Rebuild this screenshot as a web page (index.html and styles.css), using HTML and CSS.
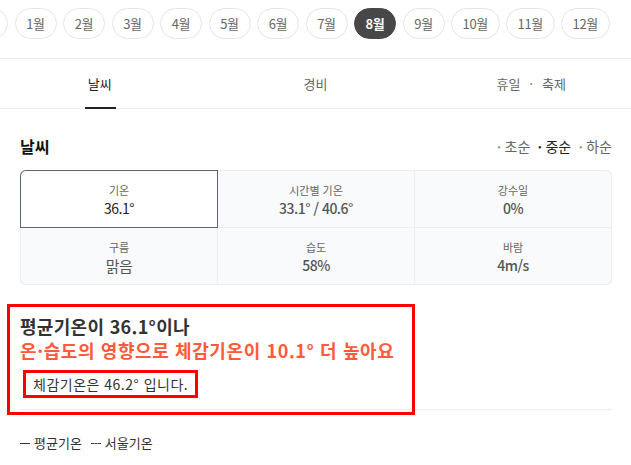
FILE: index.html
```html
<!DOCTYPE html>
<html lang="ko">
<head>
    <meta charset="UTF-8">
    <meta name="viewport" content="width=device-width, initial-scale=1.0">
    <title>8월 날씨</title>
    <link rel="stylesheet" href="styles.css">
</head>
<body>
    <div class="months">
        <button class="month month-prev"></button>
        <button class="month">1월</button>
        <button class="month">2월</button>
        <button class="month">3월</button>
        <button class="month">4월</button>
        <button class="month">5월</button>
        <button class="month">6월</button>
        <button class="month">7월</button>
        <button class="month active">8월</button>
        <button class="month">9월</button>
        <button class="month">10월</button>
        <button class="month">11월</button>
        <button class="month">12월</button>
    </div>

    <nav class="tabs">
        <a class="tab active">날씨</a>
        <a class="tab">경비</a>
        <a class="tab">휴일<span class="dot">·</span>축제</a>
    </nav>

    <section class="weather">
        <div class="weather-head">
            <h2>날씨</h2>
            <ul class="periods">
                <li>초순</li>
                <li class="current">중순</li>
                <li>하순</li>
            </ul>
        </div>

        <div class="stats">
            <div class="stat selected">
                <span class="label">기온</span>
                <strong class="value dark">36.1°</strong>
            </div>
            <div class="stat">
                <span class="label">시간별 기온</span>
                <strong class="value">33.1° / 40.6°</strong>
            </div>
            <div class="stat corner-tr">
                <span class="label">강수일</span>
                <strong class="value">0%</strong>
            </div>
            <div class="stat corner-bl">
                <span class="label">구름</span>
                <strong class="value light">맑음</strong>
            </div>
            <div class="stat">
                <span class="label">습도</span>
                <strong class="value">58%</strong>
            </div>
            <div class="stat corner-br">
                <span class="label">바람</span>
                <strong class="value">4m/s</strong>
            </div>
        </div>

        <div class="summary">
            <p class="summary-title">평균기온이 36.1°이나</p>
            <p class="summary-alert">온·습도의 영향으로 체감기온이 10.1° 더 높아요</p>
            <p class="feels">체감기온은 46.2° 입니다.</p>
            <div class="mark"></div>
        </div>

        <div class="legend">
            <span><i class="line solid"></i>평균기온</span>
            <span><i class="line dashed"></i>서울기온</span>
        </div>
    </section>
</body>
</html>
```

FILE: styles.css
```css
* {
    box-sizing: border-box;
    margin: 0;
    padding: 0;
}

body {
    font-family: "Noto Sans CJK KR", "Noto Sans", sans-serif;
    background: #fff;
    color: #333;
    overflow: hidden;
    width: 631px;
    height: 465px;
}

/* 월 선택 */
.months {
    display: flex;
    gap: 6.5px;
    height: 59px;
    padding-top: 8px;
    border-bottom: 1px solid #eeeeee;
    overflow: hidden;
}

.month {
    flex: none;
    min-width: 42px;
    height: 31px;
    padding: 0 10.5px;
    border: 1px solid #e6e6e6;
    border-radius: 16px;
    background: #fff;
    font-family: inherit;
    font-size: 13px;
    line-height: 29px;
    color: #666;
    letter-spacing: -0.3px;
}

.month-prev {
    margin-left: -34px;
    width: 42px;
}

.month.active {
    background: #474747;
    border-color: #474747;
    color: #fff;
    font-weight: 700;
}

/* 탭 */
.tabs {
    display: grid;
    grid-template-columns: repeat(3, 1fr);
    margin: 0 -8px;
    height: 50px;
    border-bottom: 1px solid #eeeeee;
}

.tab {
    position: relative;
    display: flex;
    justify-content: center;
    align-items: center;
    font-size: 13px;
    color: #666;
}

.tab .dot {
    margin: 0 9px;
}

.tab.active {
    color: #222;
}

.tab.active::after {
    content: '';
    position: absolute;
    left: 50%;
    bottom: -1px;
    width: 31px;
    height: 2px;
    margin-left: -15px;
    background: #222;
}

/* 날씨 */
.weather {
    padding: 0 19px 0 20px;
}

.weather-head {
    display: flex;
    justify-content: space-between;
    align-items: center;
    height: 22px;
    margin-top: 26px;
}

.weather-head h2 {
    font-size: 16px;
    font-weight: 700;
    color: #111;
}

.periods {
    display: flex;
    gap: 8px;
    list-style: none;
    font-size: 14px;
    color: #666;
}

.periods li::before {
    content: '•';
    margin-right: 4px;
    font-size: 9px;
    vertical-align: 2px;
    color: #999;
}

.periods li.current {
    color: #222;
}

.periods li.current::before {
    color: #222;
}

.stats {
    display: grid;
    grid-template-columns: repeat(3, 1fr);
    grid-auto-rows: 56px;
    gap: 1px;
    margin-top: 13px;
    border: 1px solid #eceef1;
    border-radius: 5px;
    background: #eceef1;
}

.stat {
    display: flex;
    flex-direction: column;
    justify-content: center;
    align-items: center;
    background: #f9fafb;
}

.stat.selected {
    background: #fff;
    border-radius: 5px 0 0 0;
    box-shadow: 0 0 0 1px #5f6673;
}

.corner-tr { border-radius: 0 5px 0 0; }
.corner-bl { border-radius: 0 0 0 5px; }
.corner-br { border-radius: 0 0 5px 0; }

.label {
    font-size: 11px;
    line-height: 18px;
    color: #666;
}

.value {
    font-size: 14px;
    line-height: 19px;
    font-weight: 500;
    color: #555;
    letter-spacing: -0.5px;
}

.value.dark {
    font-weight: 400;
    color: #222;
}

.value.light {
    font-weight: 400;
    font-size: 15px;
}

/* 체감기온 요약 */
.summary {
    position: relative;
    margin-top: 29px;
    padding-bottom: 11px;
    border-bottom: 1px solid #eeeeee;
}

.summary-title,
.summary-alert {
    font-size: 18px;
    line-height: 24px;
    font-weight: 700;
    color: #333;
    letter-spacing: 0.3px;
}

.summary-alert {
    color: #ff5a3a;
    letter-spacing: 0.6px;
}

.feels {
    display: inline-block;
    margin: 8px 0 0 3px;
    padding: 0 7px;
    border: 3px solid #ff0000;
    font-size: 14px;
    line-height: 22px;
    color: #333;
    letter-spacing: 0.5px;
}

.mark {
    position: absolute;
    top: -10px;
    left: -13px;
    width: 408px;
    height: 111px;
    border: 3px solid #ff0000;
    pointer-events: none;
}

.legend {
    display: flex;
    gap: 9px;
    margin-top: 23px;
    font-size: 13px;
    line-height: 20px;
    color: #333;
}

.legend .line {
    display: inline-block;
    width: 10px;
    margin-right: 4px;
    vertical-align: 4px;
    border-top: 1px solid #333;
}

.legend .line.dashed {
    border-top-style: dashed;
}
```
